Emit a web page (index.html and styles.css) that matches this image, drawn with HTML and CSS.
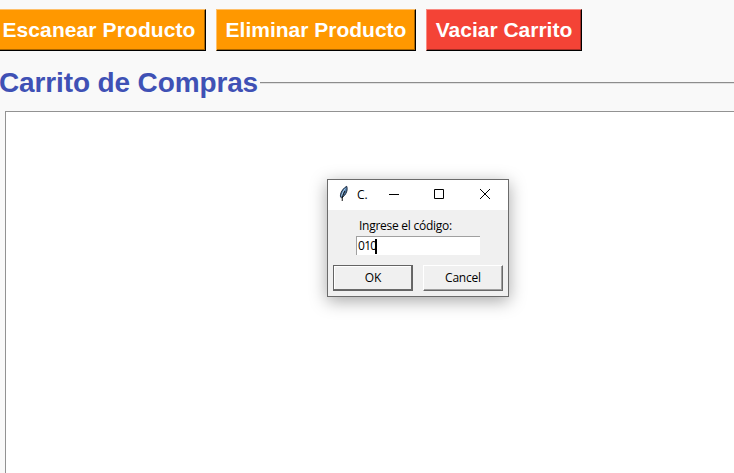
FILE: index.html
```html
<!DOCTYPE html>
<html lang="es">
<head>
<meta charset="utf-8">
<title>Carrito de Compras</title>
<link rel="stylesheet" href="styles.css">
</head>
<body>
<div class="toolbar">
  <button class="action scan"><span>Escanear Producto</span></button>
  <button class="action remove"><span>Eliminar Producto</span></button>
  <button class="action clear"><span>Vaciar Carrito</span></button>
</div>
<div class="group-title">
  <h1>Carrito de Compras</h1>
  <div class="rule"></div>
</div>
<div class="cart-list"></div>

<div class="dialog">
  <div class="titlebar">
    <svg class="feather" width="12" height="17" viewBox="0 0 12 17">
      <path d="M8.700 1.300C5.800 2.800 3 6.300 2.500 9.800c-.2 1.500 0 2.500.8 3 2.500-1 4.700-3.800 5.500-6.600.5-1.900.4-3.700-.1-4.900z" fill="#547fab" stroke="#17253a" stroke-width="1"/>
      <path d="M7.300 3.500C5.200 6 4.300 8.300 3.800 11" fill="none" stroke="#a9cbe8" stroke-width="1"/>
      <path d="M7 6C5 9 4.200 12 4.200 16" fill="none" stroke="#111" stroke-width="1"/>
    </svg>
    <span class="caption">C.</span>
    <svg class="controls" width="104" height="12" viewBox="0 0 104 12" fill="none" stroke="#000">
      <path d="M1 6.500h10M46.500 1.500h9v9h-9z"/>
      <path d="M92 1l10 10M102 1L92 11"/>
    </svg>
  </div>
  <div class="content">
    <label class="prompt"><span>Ingrese el código:</span></label>
    <div class="entry"><span>010</span><i class="caret"></i></div>
    <div class="buttons">
      <button class="ok"><span>OK</span></button>
      <button class="cancel"><span>Cancel</span></button>
    </div>
  </div>
</div>
</body>
</html>
```

FILE: styles.css
```css
* { box-sizing: border-box; }
body {
  margin: 0;
  height: 473px;
  overflow: hidden;
  position: relative;
  display: flex;
  flex-direction: column;
  background: #f9f9f9;
  font-family: "Liberation Sans", Arial, sans-serif;
}
button { margin: 0; padding: 0; border-radius: 0; white-space: nowrap; }
.toolbar { display: flex; gap: 10px; padding-top: 9px; }
.action {
  height: 42px;
  border: 1px solid;
  border-color: #ffc069 #000 #000 #ffc069;
  background: #ff9800;
  color: #fff;
  font: bold 21px/38px "Liberation Sans", Arial, sans-serif;
  box-shadow: inset -1px -1px #a86400;
}
.scan { width: 206px; border-left: 0; padding-right: 7px; letter-spacing: .1px; }
.remove { width: 200px; }
.clear {
  width: 156px;
  background: #f44336;
  border-color: #f98a82 #000 #000 #f98a82;
  box-shadow: inset -1px -1px #a52d25;
}
.group-title { display: flex; height: 42px; margin-top: 11px; }
h1 {
  margin: 0;
  width: 260px;
  flex: none;
  font-size: 28px;
  line-height: 42px;
  letter-spacing: -.13px;
  text-indent: -1px;
  color: #3f51b5;
  white-space: nowrap;
}
.rule { flex: 1; height: 2px; margin-top: 20px; border-top: 1px solid #8d8d8d; border-bottom: 1px solid #e1e1e1; }
.cart-list {
  flex: 1;
  margin: 7px 0 0 5px;
  border: solid #929292;
  border-width: 1px 0 0 1px;
  background: #fff;
}
.dialog {
  position: absolute;
  left: 327px;
  top: 179px;
  width: 182px;
  height: 118px;
  border: 1px solid #6b6b6b;
  background: #f0f0f0;
  box-shadow: 0 4px 16px rgba(0, 0, 0, .35);
  font: 12px/16px "Open Sans", "Noto Sans", sans-serif;
  color: #000;
}
.titlebar { display: flex; align-items: center; height: 30px; background: #fff; }
.feather { margin: -3px 0 0 10px; }
.caption { width: 12px; margin-left: 7px; }
.controls { margin-left: 19px; margin-top: -2px; }
.content { padding: 8px 5px 0; }
.prompt { display: block; height: 18px; padding-left: 26px; }
.prompt span { letter-spacing: -.26px; }
.entry {
  display: flex;
  align-items: center;
  width: 124px;
  height: 19px;
  margin-left: 23px;
  padding-left: 1px;
  border: solid #a0a0a0;
  border-width: 1px 0 0 1px;
  background: #fff;
  letter-spacing: -.7px;
}
.caret { width: 2px; height: 15px; margin-left: -1px; background: #000; }
.buttons { display: flex; gap: 10px; margin-top: 10px; }
.buttons button {
  width: 80px;
  height: 26px;
  background: #f0f0f0;
  color: #000;
  font: 12px/20px "Open Sans", "Noto Sans", sans-serif;
  letter-spacing: -.2px;
}
.buttons .ok { border: 1px solid #646464; box-shadow: inset -1px -1px #696969, inset 1px 1px #fff; }
.buttons .cancel { border: 1px solid; border-color: #fff #696969 #696969 #fff; box-shadow: inset -1px -1px #a0a0a0; }
```
